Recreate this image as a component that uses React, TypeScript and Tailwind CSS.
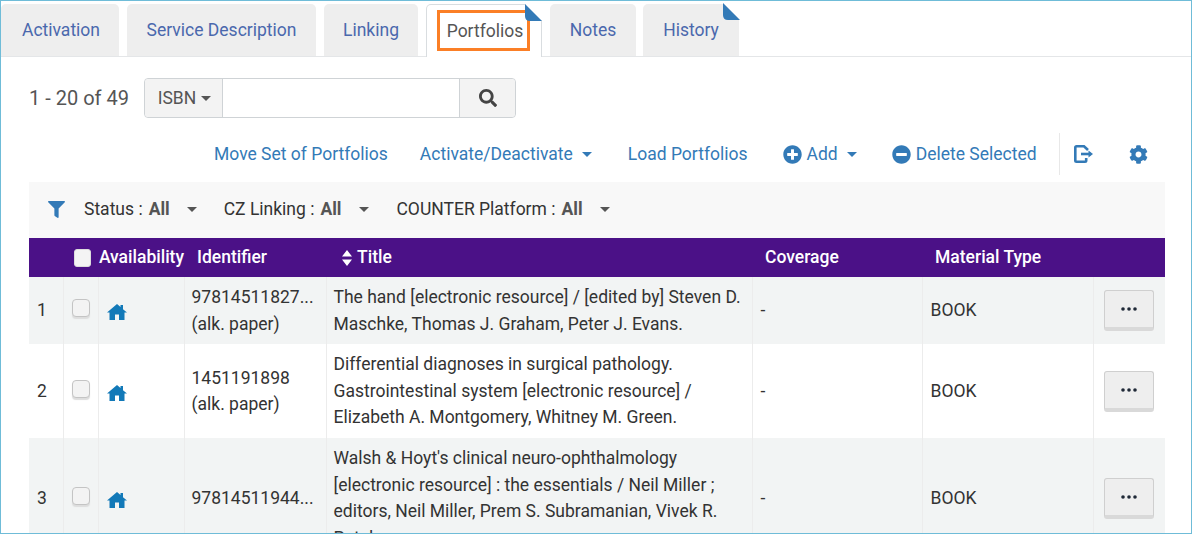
import React from "react";
import { FaSearch, FaFilter, FaPlusCircle, FaMinusCircle, FaCog } from "react-icons/fa";

const Caret = ({ className = "" }: { className?: string }) => (
  <span className={`inline-block h-0 w-0 border-x-[5px] border-t-[5px] border-x-transparent ${className}`} />
);

const Corner = () => (
  <svg className="absolute -right-px -top-px" width="17" height="17" viewBox="0 0 17 17">
    <path d="M0 0 H17 V17 Z" fill="#fff" />
    <path d="M0 0 L17 17 H5 Q0 17 0 12 Z" fill="#337ab7" />
  </svg>
);

const Home = () => (
  <svg width="20" height="16" viewBox="0 0 20 16" fill="#1279b8" className="block">
    <path d="M10 0 L13.5 3 V1 H16 V5.2 L20 8.6 H17.5 V16 H12 V10.5 H8 V16 H2.5 V8.6 H0 Z" />
  </svg>
);

const tabs = [
  { label: "Activation", w: "w-[118px] pl-[2px]", ml: "ml-0" },
  { label: "Service Description", w: "w-[189px]", ml: "ml-2" },
  { label: "Linking", w: "w-[94px]", ml: "ml-2" },
];

const Tab = ({ label, w, ml, corner }: { label: string; w: string; ml: string; corner?: boolean }) => (
  <div className={`relative flex h-[52px] items-center justify-center rounded-t-[5px] bg-[#eeeeee] text-[#4a68ad] ${w} ${ml}`}>
    {label}
    {corner && <Corner />}
  </div>
);

const Filter = ({ label, ml, gap }: { label: string; ml: string; gap: string }) => (
  <div className={`flex items-center ${ml}`}>
    <span className="text-[#333]">{label} :</span>
    <span className="ml-[6px] font-bold text-[#555]">All</span>
    <Caret className={`${gap} border-t-[#555]`} />
  </div>
);

const Action = () => (
  <button className="flex h-[41px] w-[50px] items-center justify-center rounded-[3px] border border-[#cfcfcf] border-b-[4px] border-b-[#d9d9d9] bg-[#eeeeee]">
    <svg width="18" height="4" viewBox="0 0 18 4" fill="#1f2937">
      <circle cx="3" cy="2" r="1.8" />
      <circle cx="9" cy="2" r="1.8" />
      <circle cx="15" cy="2" r="1.8" />
    </svg>
  </button>
);

const rows = [
  {
    n: "1",
    id: ["97814511827...", "(alk. paper)"],
    title: ["The hand [electronic resource] / [edited by] Steven D.", "Maschke, Thomas J. Graham, Peter J. Evans."],
    bg: "bg-[#f2f4f4]",
    h: "h-[67px]",
  },
  {
    n: "2",
    id: ["1451191898", "(alk. paper)"],
    title: [
      "Differential diagnoses in surgical pathology.",
      "Gastrointestinal system [electronic resource] /",
      "Elizabeth A. Montgomery, Whitney M. Green.",
    ],
    bg: "bg-white",
    h: "h-[94px]",
  },
  {
    n: "3",
    id: ["97814511944..."],
    title: [
      "Walsh & Hoyt's clinical neuro-ophthalmology",
      "[electronic resource] : the essentials / Neil Miller ;",
      "editors, Neil Miller, Prem S. Subramanian, Vivek R.",
      "Patel.",
    ],
    bg: "bg-[#f2f4f4]",
    h: "h-[119px]",
  },
];

const cell = "border-r border-[#ececec] align-middle px-2";

export default function App() {
  return (
    <div className="h-[534px] w-[1192px] overflow-hidden border border-[#6fbcd8] bg-white font-['Roboto',sans-serif] text-[17.5px] leading-[26.5px] text-[#333]">
      <div className="flex h-[56px] items-end border-b border-[#e4e6e8]">
        {tabs.map((t) => (
          <Tab key={t.label} {...t} />
        ))}
        <div className="relative -mb-px ml-2 flex h-[53px] w-[116px] items-center justify-center rounded-t-[5px] border-x border-t border-[#d9dde0] bg-white pl-[2px] text-[#555]">
          <span className="absolute left-[10px] top-[5px] h-[41px] w-[93px] border-[3px] border-[#fb7f26]" />
          Portfolios
          <Corner />
        </div>
        <Tab label="Notes" w="w-[86px]" ml="ml-2" />
        <Tab label="History" w="w-[96px]" ml="ml-[7px]" corner />
      </div>

      <div className="mt-[21px] flex items-center pl-[28px]">
        <span className="w-[115px] pt-[1px] text-[20px] text-[#555]">1 - 20 of 49</span>
        <div className="flex h-[40px] w-[372px] rounded-[4px] border border-[#cfd3d6]">
          <div className="flex w-[78px] items-center justify-center gap-[5px] rounded-l-[4px] border-r border-[#cfd3d6] bg-[#f3f3f3] pl-[2px] text-[#555]">
            ISBN <Caret className="border-t-[#555]" />
          </div>
          <div className="flex-1" />
          <div className="flex w-[56px] items-center justify-center rounded-r-[4px] border-l border-[#cfd3d6] bg-[#f3f3f3] text-[#444]">
            <FaSearch size={18} />
          </div>
        </div>
      </div>

      <div className="mt-[14px] flex h-[44px] items-center pl-[213px] text-[#337ab7]">
        <span>Move Set of Portfolios</span>
        <span className="ml-[32px]">Activate/Deactivate</span>
        <Caret className="ml-[9px] border-t-[#337ab7]" />
        <span className="ml-[36px]">Load Portfolios</span>
        <FaPlusCircle size={19} className="ml-[35px]" />
        <span className="ml-[5px]">Add</span>
        <Caret className="ml-[9px] border-t-[#337ab7]" />
        <FaMinusCircle size={19} className="ml-[35px]" />
        <span className="ml-[5px]">Delete Selected</span>
        <span className="ml-[22px] h-[42px] w-px bg-[#e8e8e8]" />
        <svg className="ml-[14px]" width="20" height="18" viewBox="0 0 20 18" fill="none" stroke="#337ab7" strokeWidth="2.6">
          <path d="M14 5 L10 1.3 H2.5 Q1.3 1.3 1.3 2.5 V15.5 Q1.3 16.7 2.5 16.7 H11 Q12.2 16.7 12.2 15.5 V13" />
          <path d="M7 9 H17" />
          <path d="M14.5 5.5 L19 9 L14.5 12.5 Z" fill="#337ab7" stroke="none" />
        </svg>
        <FaCog size={19} className="ml-[35px]" />
      </div>

      <div className="ml-[28px] mr-[26px] mt-[6px]">
        <div className="flex h-[56px] items-center bg-[#f8f8f8] pb-[2px] pl-[19px]">
          <FaFilter size={17} className="text-[#337ab7]" />
          <Filter label="Status" ml="ml-[19px]" gap="ml-[17px]" />
          <Filter label="CZ Linking" ml="ml-[27px]" gap="ml-[18px]" />
          <Filter label="COUNTER Platform" ml="ml-[27px]" gap="ml-[17px]" />
        </div>

        <table className="w-full table-fixed border-collapse">
          <colgroup>
            <col className="w-[34px]" />
            <col className="w-[35px]" />
            <col className="w-[86px]" />
            <col className="w-[142px]" />
            <col className="w-[426px]" />
            <col className="w-[170px]" />
            <col className="w-[171px]" />
            <col />
          </colgroup>
          <thead>
            <tr className="h-[39px] bg-[#4b1187] font-medium text-white">
              <th className="p-0 font-medium" />
              <th colSpan={2} className="p-0 text-left font-medium">
                <div className="flex items-center pl-[11px]">
                  <span className="h-[18px] w-[18px] rounded-[3px] border border-[#ddd] bg-[#f4f4f4]" />
                  <span className="ml-2">Availability</span>
                </div>
              </th>
              <th className="pl-[13px] text-left font-medium">Identifier</th>
              <th className="pl-[15px] text-left font-medium">
                <span className="flex items-center">
                  <svg width="12" height="18" viewBox="0 0 12 18" fill="white" className="mr-[4px]">
                    <path d="M6 1 L11 7.5 H1 Z M6 17 L1 10.5 H11 Z" />
                  </svg>
                  Title
                </span>
              </th>
              <th className="pl-[13px] text-left font-medium">Coverage</th>
              <th className="pl-[13px] text-left font-medium">Material Type</th>
              <th />
            </tr>
          </thead>
          <tbody>
            {rows.map((r) => (
              <tr key={r.n} className={`${r.bg} ${r.h}`}>
                <td className={cell}>{r.n}</td>
                <td className={`${cell} pb-[5px]`}>
                  <span className="block h-[18px] w-[18px] rounded-[4px] border border-[#c4c4c4] bg-[#f3f3f3] shadow-[0_2px_1px_#dddddd]" />
                </td>
                <td className={`${cell} pt-[3px]`}>
                  <Home />
                </td>
                <td className={`${cell} whitespace-nowrap !pl-[7px]`}>
                  {r.id.map((l) => (
                    <div key={l}>{l}</div>
                  ))}
                </td>
                <td className={`${cell} whitespace-nowrap !pl-[7px] py-[7px]`}>
                  {r.title.map((l) => (
                    <div key={l}>{l}</div>
                  ))}
                </td>
                <td className={cell}>-</td>
                <td className={cell}>BOOK</td>
                <td className="pl-[10px] align-middle">
                  <Action />
                </td>
              </tr>
            ))}
          </tbody>
        </table>
      </div>
    </div>
  );
}
